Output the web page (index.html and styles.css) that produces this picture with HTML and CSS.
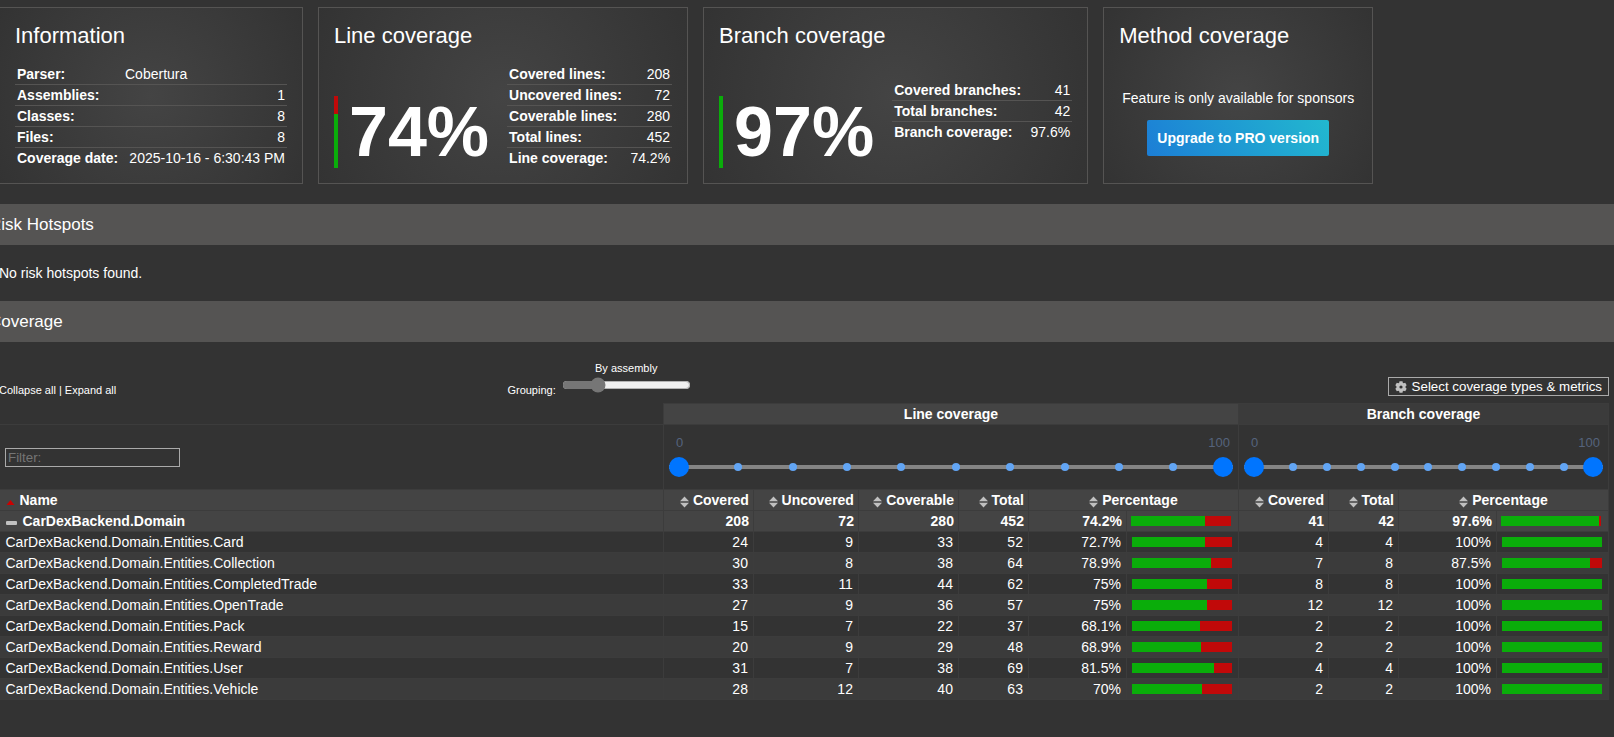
FILE: index.html
```html
<!DOCTYPE html>
<html lang="en">
<head>
<meta charset="utf-8">
<title>Coverage report</title>
<link rel="stylesheet" href="styles.css">
</head>
<body>
<svg class="sprite" aria-hidden="true">
  <symbol id="sort" viewBox="0 0 9 12"><path fill="#c0c0c0" d="M4.500 0.500L9 5.200H0zM0 6.800h9L4.500 11.500z"/></symbol>
</svg>
<main class="container">
  <div class="cards">
    <section class="card">
      <h2 class="card-title">Information</h2>
      <div class="card-body">
        <table class="facts facts-info">
          <tr><th>Parser:</th><td class="text">Cobertura</td></tr>
          <tr><th>Assemblies:</th><td>1</td></tr>
          <tr><th>Classes:</th><td>8</td></tr>
          <tr><th>Files:</th><td>8</td></tr>
          <tr><th>Coverage date:</th><td>2025-10-16 - 6:30:43 PM</td></tr>
        </table>
      </div>
    </section>
    <section class="card">
      <h2 class="card-title">Line coverage</h2>
      <div class="card-body">
        <div class="large bar-74">74%</div>
        <table class="facts facts-line">
          <tr><th>Covered lines:</th><td>208</td></tr>
          <tr><th>Uncovered lines:</th><td>72</td></tr>
          <tr><th>Coverable lines:</th><td>280</td></tr>
          <tr><th>Total lines:</th><td>452</td></tr>
          <tr><th>Line coverage:</th><td>74.2%</td></tr>
        </table>
      </div>
    </section>
    <section class="card">
      <h2 class="card-title">Branch coverage</h2>
      <div class="card-body">
        <div class="large bar-97">97%</div>
        <table class="facts facts-branch">
          <tr><th>Covered branches:</th><td>41</td></tr>
          <tr><th>Total branches:</th><td>42</td></tr>
          <tr><th>Branch coverage:</th><td>97.6%</td></tr>
        </table>
      </div>
    </section>
    <section class="card card-method">
      <h2 class="card-title">Method coverage</h2>
      <div class="card-body pro">
        <div>Feature is only available for sponsors</div>
        <a class="pro-button" href="#pro">Upgrade to PRO version</a>
      </div>
    </section>
  </div>

  <h1>Risk Hotspots</h1>
  <p class="empty">No risk hotspots found.</p>
  <h1>Coverage</h1>

  <div class="toolbar">
    <div class="toggles"><a href="#collapse">Collapse all</a> | <a href="#expand">Expand all</a></div>
    <div class="grouping">
      <label for="grouping">Grouping:</label>
      <div class="grouping-slider">
        <span>By assembly</span>
        <input id="grouping" type="range" min="0" max="4" value="1">
      </div>
    </div>
    <button class="settings" type="button"><svg class="gear" viewBox="0 0 12 12" aria-hidden="true"><path fill="#c0c0c0" fill-rule="evenodd" d="M4.500 0.300h3l.3 1.400.9.500 1.500-.5 1.500 2.500-1.100 1v1.500l1.100 1-1.500 2.500-1.500-.5-.9.500-.3 1.500h-3l-.3-1.500-.9-.5-1.500.5L.3 7.700l1.100-1V5.200l-1.100-1 1.500-2.500 1.500.5.9-.5zM6 4.400a1.600 1.600 0 1 0 0 3.200 1.600 1.600 0 0 0 0-3.200z"/></svg>Select coverage types &amp; metrics</button>
  </div>

  <table class="overview">
    <colgroup>
      <col><col class="w90"><col class="w105"><col class="w100"><col class="w70"><col class="w98"><col class="w112">
      <col class="w90"><col class="w70"><col class="w98"><col class="w112">
    </colgroup>
    <thead>
      <tr class="types">
        <th class="blank"></th>
        <th class="line" colspan="6">Line coverage</th>
        <th class="branch" colspan="4">Branch coverage</th>
      </tr>
      <tr class="filters">
        <td><input class="filter" type="text" placeholder="Filter:" aria-label="Filter"></td>
        <td colspan="6">
          <div class="limits"><span>0</span><span>100</span></div>
          <div class="slider">
            <div class="ticks"><i></i><i></i><i></i><i></i><i></i><i></i><i></i><i></i><i></i><i></i><i></i></div>
            <input type="range" min="0" max="100" value="0" aria-label="Minimum line coverage">
            <input type="range" min="0" max="100" value="100" aria-label="Maximum line coverage">
          </div>
        </td>
        <td colspan="4">
          <div class="limits"><span>0</span><span>100</span></div>
          <div class="slider">
            <div class="ticks"><i></i><i></i><i></i><i></i><i></i><i></i><i></i><i></i><i></i><i></i><i></i></div>
            <input type="range" min="0" max="100" value="0" aria-label="Minimum branch coverage">
            <input type="range" min="0" max="100" value="100" aria-label="Maximum branch coverage">
          </div>
        </td>
      </tr>
      <tr class="group">
        <th class="name"><a class="sort" href="#name"><svg viewBox="0 0 9 12" aria-hidden="true"><path fill="#c00" d="M4.500 4L8.500 9h-8z"/></svg>Name</a></th>
        <th><a class="sort" href="#covered"><svg><use href="#sort"/></svg>Covered</a></th>
        <th><a class="sort" href="#uncovered"><svg><use href="#sort"/></svg>Uncovered</a></th>
        <th><a class="sort" href="#coverable"><svg><use href="#sort"/></svg>Coverable</a></th>
        <th><a class="sort" href="#total"><svg><use href="#sort"/></svg>Total</a></th>
        <th class="center" colspan="2"><a class="sort" href="#percentage"><svg><use href="#sort"/></svg>Percentage</a></th>
        <th><a class="sort" href="#bcovered"><svg><use href="#sort"/></svg>Covered</a></th>
        <th><a class="sort" href="#btotal"><svg><use href="#sort"/></svg>Total</a></th>
        <th class="center" colspan="2"><a class="sort" href="#bpercentage"><svg><use href="#sort"/></svg>Percentage</a></th>
      </tr>
    </thead>
    <tbody>
      <tr class="group">
        <th class="name"><a class="sort minus" href="#domain"><svg viewBox="0 0 11 12" aria-hidden="true"><rect x="0" y="5" width="11" height="4" rx="1" fill="#c0c0c0"/></svg>CarDexBackend.Domain</a></th>
        <th>208</th><th>72</th><th>280</th><th>452</th><th>74.2%</th><th><div class="bar"><div style="width:74%"></div></div></th>
        <th>41</th><th>42</th><th>97.6%</th><th><div class="bar"><div style="width:98%"></div></div></th>
      </tr>
      <tr><td class="name"><a href="#card">CarDexBackend.Domain.Entities.Card</a></td>
        <td>24</td><td>9</td><td>33</td><td>52</td><td>72.7%</td><td><div class="bar"><div style="width:73%"></div></div></td>
        <td>4</td><td>4</td><td>100%</td><td><div class="bar"><div style="width:100%"></div></div></td></tr>
      <tr><td class="name"><a href="#collection">CarDexBackend.Domain.Entities.Collection</a></td>
        <td>30</td><td>8</td><td>38</td><td>64</td><td>78.9%</td><td><div class="bar"><div style="width:79%"></div></div></td>
        <td>7</td><td>8</td><td>87.5%</td><td><div class="bar"><div style="width:88%"></div></div></td></tr>
      <tr><td class="name"><a href="#completedtrade">CarDexBackend.Domain.Entities.CompletedTrade</a></td>
        <td>33</td><td>11</td><td>44</td><td>62</td><td>75%</td><td><div class="bar"><div style="width:75%"></div></div></td>
        <td>8</td><td>8</td><td>100%</td><td><div class="bar"><div style="width:100%"></div></div></td></tr>
      <tr><td class="name"><a href="#opentrade">CarDexBackend.Domain.Entities.OpenTrade</a></td>
        <td>27</td><td>9</td><td>36</td><td>57</td><td>75%</td><td><div class="bar"><div style="width:75%"></div></div></td>
        <td>12</td><td>12</td><td>100%</td><td><div class="bar"><div style="width:100%"></div></div></td></tr>
      <tr><td class="name"><a href="#pack">CarDexBackend.Domain.Entities.Pack</a></td>
        <td>15</td><td>7</td><td>22</td><td>37</td><td>68.1%</td><td><div class="bar"><div style="width:68%"></div></div></td>
        <td>2</td><td>2</td><td>100%</td><td><div class="bar"><div style="width:100%"></div></div></td></tr>
      <tr><td class="name"><a href="#reward">CarDexBackend.Domain.Entities.Reward</a></td>
        <td>20</td><td>9</td><td>29</td><td>48</td><td>68.9%</td><td><div class="bar"><div style="width:69%"></div></div></td>
        <td>2</td><td>2</td><td>100%</td><td><div class="bar"><div style="width:100%"></div></div></td></tr>
      <tr><td class="name"><a href="#user">CarDexBackend.Domain.Entities.User</a></td>
        <td>31</td><td>7</td><td>38</td><td>69</td><td>81.5%</td><td><div class="bar"><div style="width:82%"></div></div></td>
        <td>4</td><td>4</td><td>100%</td><td><div class="bar"><div style="width:100%"></div></div></td></tr>
      <tr><td class="name"><a href="#vehicle">CarDexBackend.Domain.Entities.Vehicle</a></td>
        <td>28</td><td>12</td><td>40</td><td>63</td><td>70%</td><td><div class="bar"><div style="width:70%"></div></div></td>
        <td>2</td><td>2</td><td>100%</td><td><div class="bar"><div style="width:100%"></div></div></td></tr>
    </tbody>
  </table>
</main>
</body>
</html>
```
FILE: styles.css
```css
* { box-sizing: border-box; }

body {
  margin: 0;
  overflow-x: hidden;
  background: #333;
  color: #fff;
  font: 14px/16px "Liberation Sans", Arial, sans-serif;
}

a { color: inherit; text-decoration: none; }
table { border-spacing: 0; }
.sprite { display: none; }

.container { margin: 0 5px 0 -1px; padding-top: 7px; }

/* Summary cards */
.cards { display: flex; gap: 15px; margin-bottom: 20px; }
.card {
  display: flex;
  flex-direction: column;
  padding: 15px;
  border: 1px solid #555453;
  background: radial-gradient(circle, #444, #333);
}
.card-method { min-width: 270px; }
.card-title { margin: 0 0 16px; font-size: 22px; font-weight: normal; line-height: 25px; }
.card-body { display: flex; flex: 1; align-items: center; gap: 15px; }

.large {
  align-self: flex-end;
  padding: 0 3px 0 15px;
  font-size: 70px;
  line-height: 72px;
  font-weight: bold;
}
.bar-74 { background: linear-gradient(#c10909 25%, #0aad0a 25%) left / 4px 100% no-repeat; }
.bar-97 { background: linear-gradient(#0aad0a, #0aad0a) left / 4px 100% no-repeat; }

.facts th, .facts td { padding: 2px; border-bottom: 1px solid #555453; white-space: nowrap; }
.facts tr:last-child > * { border-bottom: 0; }
.facts th { text-align: left; }
.facts td { text-align: right; }
.facts td.text { text-align: left; }
.facts-info { width: 272px; }
.facts-line { width: 165px; }
.facts-branch { width: 180px; margin-bottom: 10px; }

.pro { flex-direction: column; justify-content: flex-end; gap: 14px; padding-bottom: 12px; }
.pro-button {
  padding: 10px;
  border-radius: 2px;
  background: linear-gradient(60deg, #1c7ed6, #22b8cf);
  font-weight: bold;
}

/* Section headings */
h1 {
  margin: 0 -5px 0 0;
  padding: 10px 0;
  background: #555453;
  font-size: 17px;
  font-weight: normal;
  line-height: 21px;
  text-indent: -10px;
}
.empty { margin: 20px 0; }

/* Toolbar */
.toolbar {
  display: grid;
  grid-template-columns: 6fr 7fr 6fr;
  align-items: end;
  padding: 20px 0 7px;
  font-size: 11px;
  line-height: 12px;
}
.grouping { display: flex; align-items: flex-end; gap: 4px; }
.grouping-slider { display: flex; flex-direction: column; align-items: center; margin-bottom: 1px; gap: 1px; }
.grouping-slider input { accent-color: #767676; }
.settings {
  display: flex;
  align-items: center;
  justify-self: end;
  gap: 5px;
  padding: 1px 6px;
  border: 1px solid #aaa;
  background: #333;
  color: #fff;
  font-family: "Liberation Sans", Arial, sans-serif;
}
.gear { width: 12px; height: 12px; }

/* Coverage table */
.overview { width: 100%; table-layout: fixed; border-collapse: collapse; }
.w70 { width: 70px; }
.w90 { width: 90px; }
.w98 { width: 98px; }
.w100 { width: 100px; }
.w105 { width: 105px; }
.w112 { width: 112px; }
.overview th, .overview td {
  padding: 2px 4px;
  border: 1px solid #3c3c3c;
  text-align: right;
  white-space: nowrap;
}
.overview td { padding-right: 5px; padding-left: 5px; }
.overview .name { padding-left: 6px; text-align: left; border-left: 0; }
.overview .center, .overview .types th { text-align: center; }
.overview .blank { border-top: 0; border-left: 0; }
.group, .line { background: #444; }
.branch, .overview tbody tr:nth-child(odd):not(.group) { background: #3b3b3b; }

.sort { display: inline-flex; align-items: center; gap: 4px; vertical-align: top; }
.sort svg { width: 9px; height: 12px; margin-top: 3px; }
.name .sort { gap: 5px; }
.name .sort.minus { gap: 6px; }
.sort.minus svg { width: 11px; margin-top: 1px; }
.bar { width: 100px; height: 10px; background: #c10909; }
.bar div { height: 100%; background: #0aad0a; }

.overview .filters td { height: 65px; padding: 0 5px; text-align: left; }
.filter {
  display: block;
  width: 175px;
  padding: 1px 2px;
  border: 1px solid #aaa;
  background: #333;
  color: #fff;
  font-family: "Liberation Sans", Arial, sans-serif;
}
.filter::placeholder { color: #757575; }

.limits {
  display: flex;
  justify-content: space-between;
  padding: 0 3px 0 7px;
  color: #55637d;
  font-size: 13px;
}
.slider {
  display: grid;
  margin: 6px 0 2px;
  background: linear-gradient(#848484, #848484) center / 100% 4px no-repeat;
}
.slider > * { grid-area: 1 / 1; }
.ticks { display: flex; align-items: center; justify-content: space-between; padding: 0 1px 0 11px; }
.ticks i { width: 8px; height: 8px; border-radius: 50%; background: #62a5f4; }
.slider input {
  appearance: none;
  width: 100%;
  height: 20px;
  margin: 0;
  background: transparent;
  pointer-events: none;
}
.slider input::-webkit-slider-thumb {
  appearance: none;
  width: 20px;
  height: 20px;
  border-radius: 50%;
  background: #0075ff;
  pointer-events: auto;
}
```
